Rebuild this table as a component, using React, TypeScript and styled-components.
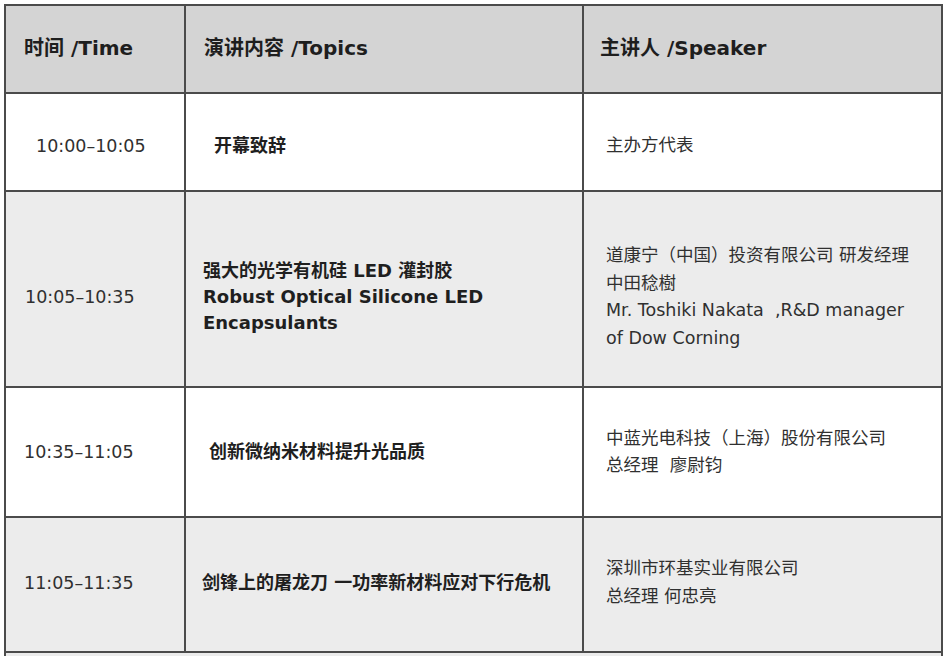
import React from 'react';
import styled, { createGlobalStyle } from 'styled-components';

const GlobalStyle = createGlobalStyle`
  html, body {
    margin: 0;
    background: #ffffff;
    overflow: hidden;
  }
  body {
    font-family: 'DejaVu Sans', 'Noto Sans CJK SC', sans-serif;
    color: #2e2e2e;
  }
`;

const Page = styled.div`
  padding: 4px 0 0 4px;
`;

// table lines are the grid background showing through the gaps
const Schedule = styled.div`
  display: grid;
  grid-template-columns: 178px 396px 357px;
  grid-template-rows: 86px 96px 194px 128px 133px 3px;
  gap: 2px;
  padding: 2px 2px 0;
  width: fit-content;
  background: #4b4b4b;
`;

const HeadCell = styled.div<{ $indent: number }>`
  display: flex;
  align-items: center;
  padding: 0 0 6px ${p => p.$indent}px;
  background: #d4d4d4;
  color: #1e1e1e;
  font-size: 20px;
  font-weight: bold;
`;

const Cell = styled.div<{ $indent: number; $tone: 'white' | 'grey'; $nudge: number }>`
  display: flex;
  flex-direction: column;
  justify-content: center;
  padding: ${p => (p.$nudge >= 0 ? `${p.$nudge * 2}px 8px 0` : `0 8px ${-p.$nudge * 2}px`)};
  padding-left: ${p => p.$indent}px;
  background: ${p => (p.$tone === 'grey' ? '#ececec' : '#ffffff')};
`;

const FillRow = styled.div`
  grid-column: 1 / -1;
  background: #ececec;
`;

const Time = styled.span`
  font-size: 17.5px;
  color: #303030;
`;

const Topic = styled.span`
  font-size: 18px;
  font-weight: bold;
  line-height: 26px;
  color: #1f1f1f;
`;

const Speaker = styled.span`
  font-size: 17.5px;
  line-height: 27.5px;
  white-space: pre;
  color: #303030;
`;

type Session = {
  time: string;
  timeIndent: number;
  topic: string[];
  topicIndent: number;
  speaker: string[];
  tone: 'white' | 'grey';
  nudge: number;
};

const sessions: Session[] = [
  {
    time: '10:00–10:05',
    timeIndent: 30,
    topic: ['开幕致辞'],
    topicIndent: 28,
    speaker: ['主办方代表'],
    tone: 'white',
    nudge: 4,
  },
  {
    time: '10:05–10:35',
    timeIndent: 19,
    topic: ['强大的光学有机硅 LED 灌封胶', 'Robust Optical Silicone LED', 'Encapsulants'],
    topicIndent: 17,
    speaker: [
      '道康宁（中国）投资有限公司 研发经理',
      '中田稔樹',
      'Mr. Toshiki Nakata  ,R&D manager',
      'of Dow Corning',
    ],
    tone: 'grey',
    nudge: 8,
  },
  {
    time: '10:35–11:05',
    timeIndent: 18,
    topic: ['创新微纳米材料提升光品质'],
    topicIndent: 23,
    speaker: ['中蓝光电科技（上海）股份有限公司', '总经理  廖尉钧'],
    tone: 'white',
    nudge: 0,
  },
  {
    time: '11:05–11:35',
    timeIndent: 18,
    topic: ['剑锋上的屠龙刀 一功率新材料应对下行危机'],
    topicIndent: 16,
    speaker: ['深圳市环基实业有限公司', '总经理 何忠亮'],
    tone: 'grey',
    nudge: -2,
  },
];

export default function App() {
  return (
    <>
      <GlobalStyle />
      <Page>
        <Schedule>
          <HeadCell $indent={18}>时间 /Time</HeadCell>
          <HeadCell $indent={18}>演讲内容 /Topics</HeadCell>
          <HeadCell $indent={16}>主讲人 /Speaker</HeadCell>

          {sessions.map(s => (
            <React.Fragment key={s.time}>
              <Cell $indent={s.timeIndent} $tone={s.tone} $nudge={s.nudge}>
                <Time>{s.time}</Time>
              </Cell>
              <Cell $indent={s.topicIndent} $tone={s.tone} $nudge={s.nudge}>
                {s.topic.map(line => (
                  <Topic key={line}>{line}</Topic>
                ))}
              </Cell>
              <Cell $indent={22} $tone={s.tone} $nudge={s.nudge}>
                {s.speaker.map(line => (
                  <Speaker key={line}>{line}</Speaker>
                ))}
              </Cell>
            </React.Fragment>
          ))}

          <FillRow />
        </Schedule>
      </Page>
    </>
  );
}
